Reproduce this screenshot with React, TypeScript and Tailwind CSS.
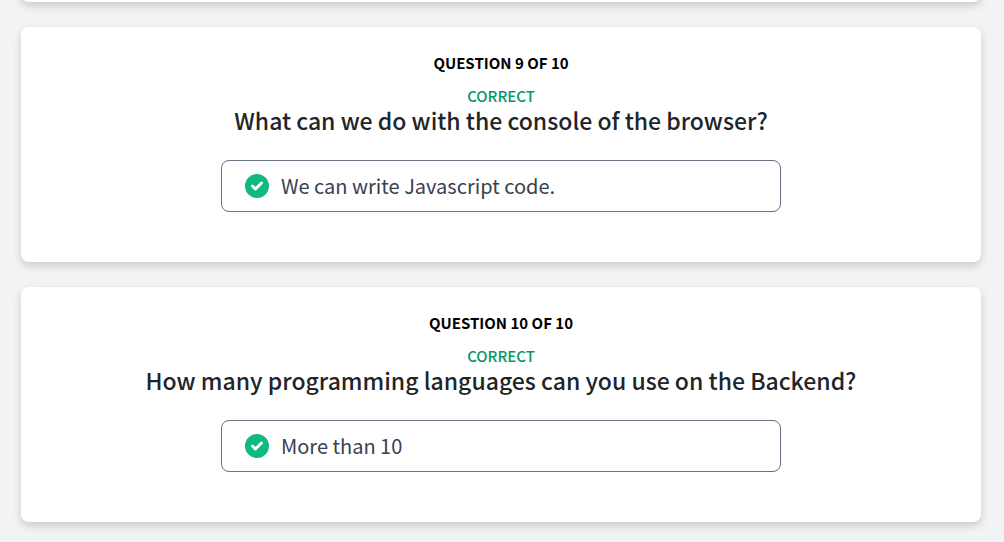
import React from "react";

const questions = [
  {
    number: 9,
    title: "What can we do with the console of the browser?",
    answer: "We can write Javascript code.",
  },
  {
    number: 10,
    title: "How many programming languages can you use on the Backend?",
    answer: "More than 10",
  },
];

const TOTAL = 10;

function CheckCircle() {
  return (
    <svg viewBox="2 2 16 16" className="h-6 w-6 shrink-0" fill="#10b981" aria-hidden="true">
      <path
        fillRule="evenodd"
        clipRule="evenodd"
        d="M10 18a8 8 0 100-16 8 8 0 000 16zm3.707-9.293a1 1 0 00-1.414-1.414L9 10.586 7.707 9.293a1 1 0 00-1.414 1.414l2 2a1 1 0 001.414 0l4-4z"
      />
    </svg>
  );
}

function QuestionCard({ number, title, answer }: { number: number; title: string; answer: string }) {
  return (
    <section className="rounded-lg bg-white px-6 pt-6 pb-[50px] text-center shadow-[0_4px_8px_rgba(0,0,0,0.16)]">
      <p className="text-[15px] leading-6 font-bold text-black uppercase">
        Question {number} of {TOTAL}
      </p>
      <p className="mt-[9px] text-[15px] leading-6 font-medium text-[#059669] uppercase">Correct</p>
      <h2 className="text-[23px] leading-6 font-medium text-[#212529]">{title}</h2>
      <div className="mx-auto mt-7 flex h-[52px] max-w-[560px] items-center gap-3 rounded-lg border border-gray-500 px-[23px] text-left">
        <CheckCircle />
        <span className="text-xl leading-7 text-[#374151]">{answer}</span>
      </div>
    </section>
  );
}

export default function App() {
  return (
    <main className="min-h-screen overflow-hidden bg-[#f2f3f5] pr-0.5 pb-5 font-['Noto_Sans_CJK_SC',sans-serif]">
      <div className="mx-auto flex max-w-[960px] flex-col gap-[25px]">
        {/* tail of the previous card, scrolled out of view */}
        <div className="flex h-0.5 items-end">
          <div className="h-10 w-full shrink-0 rounded-lg bg-white shadow-[0_4px_8px_rgba(0,0,0,0.16)]" />
        </div>
        {questions.map((q) => (
          <QuestionCard key={q.number} {...q} />
        ))}
      </div>
    </main>
  );
}
